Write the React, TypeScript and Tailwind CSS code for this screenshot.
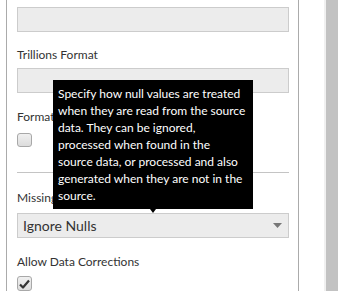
import React from "react";

const font = { fontFamily: 'Lato, "Open Sans", sans-serif' };

function Label({ children, className = "" }: { children: React.ReactNode; className?: string }) {
  return (
    <div className={`h-[16px] text-[12px] leading-[16px] text-[#333] whitespace-nowrap ${className}`}>
      {children}
    </div>
  );
}

function TextBox({ className = "" }: { className?: string }) {
  return <div className={`h-[25px] border border-[#cccccc] bg-[#ececec] ${className}`} />;
}

function CheckBox({ checked, className = "" }: { checked?: boolean; className?: string }) {
  return (
    <div
      className={`w-[15px] h-[15px] rounded-[3px] border border-[#a8a8a8] bg-gradient-to-b from-[#f0f0f0] to-[#dcdcdc] flex items-center justify-center ${className}`}
    >
      {checked && (
        <svg width="11" height="10" viewBox="0 0 11 10">
          <path d="M1 5.5 L4 8.5 L10 1.5" fill="none" stroke="#333" strokeWidth="2.2" strokeLinejoin="round" />
        </svg>
      )}
    </div>
  );
}

export default function App() {
  return (
    <div className="relative w-[338px] h-[291px] overflow-hidden bg-white flex" style={font}>
      <div className="ml-[6px] w-[293px] h-full border-x border-[#ababab] bg-white pl-[10px] pr-[9px] flex flex-col">
        <TextBox className="mt-[7px]" />
        <Label className="mt-[15px]">Trillions Format</Label>
        <TextBox className="mt-[5px]" />
        <Label className="mt-[16px]">Format Nulls</Label>
        <CheckBox className="mt-[8px]" />
        <div className="mt-[25px] h-px bg-[#c4c4c4]" />
        <Label className="mt-[17px]">Missing Values</Label>
        <div className="mt-[7px] h-[25px] border border-[#cccccc] bg-[#ececec] flex items-center justify-between pl-[5px] pr-[6px]">
          <span className="text-[14px] text-[#333]">Ignore Nulls</span>
          <svg width="9" height="5" viewBox="0 0 9 5">
            <path d="M0 0 H9 L4.5 5 Z" fill="#777" />
          </svg>
        </div>
        <Label className="mt-[16px]">Allow Data Corrections</Label>
        <CheckBox checked className="mt-[6px]" />
      </div>
      <div className="w-[25px]" />
      <div className="w-[2px] bg-[#f0f0f0]" />
      <div className="flex-1 bg-[#c2c2c2]" />

      <div className="absolute left-[53px] top-[80px] w-[200px] h-[129px] bg-black px-[5px] pt-[5px] text-[12px] leading-[17px] text-white whitespace-nowrap">
        Specify how null values are treated
        <br />
        when they are read from the source
        <br />
        data. They can be ignored,
        <br />
        processed when found in the
        <br />
        source data, or processed and also
        <br />
        generated when they are not in the
        <br />
        source.
        <div className="absolute left-[97px] top-full w-0 h-0 border-x-[3px] border-x-transparent border-t-[4px] border-t-black" />
      </div>
    </div>
  );
}
